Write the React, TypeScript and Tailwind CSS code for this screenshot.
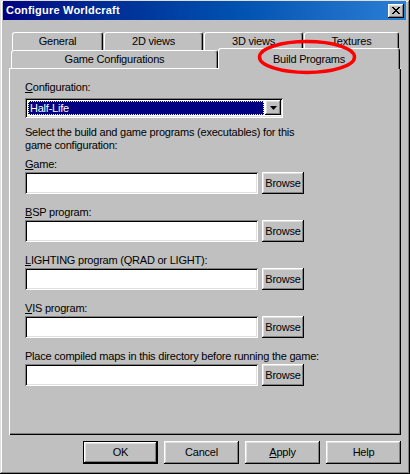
import React from "react";

const raised =
  "shadow-[inset_-1px_-1px_#000,inset_1px_1px_#fff,inset_-2px_-2px_#808080,inset_2px_2px_#dfdfdf]";
const sunken =
  "shadow-[inset_1px_1px_#808080,inset_-1px_-1px_#fff,inset_2px_2px_#000,inset_-2px_-2px_#dfdfdf]";

function U({ c }: { c: string }) {
  return <span className="underline underline-offset-[1px]">{c}</span>;
}

function Field({ label }: { label: React.ReactNode }) {
  return (
    <div className="flex flex-col">
      <div className="h-[13px] leading-[13px]">{label}</div>
      <div className="mt-[1px] flex items-start gap-[4px]">
        <div className={`w-[233px] h-[22px] bg-white ${sunken}`} />
        <button
          className={`w-[42px] h-[22px] bg-[#c0c0c0] flex items-center justify-center text-black ${raised}`}
        >
          Browse
        </button>
      </div>
    </div>
  );
}

function Tab({
  label,
  className,
}: {
  label: string;
  className: string;
}) {
  return (
    <div
      className={`h-[18px] bg-[#c0c0c0] border-l border-t border-white rounded-t-[3px] border-r border-r-black shadow-[inset_-1px_0_#808080] flex items-center justify-center ${className}`}
    >
      {label}
    </div>
  );
}

function DlgButton({
  children,
  isDefault,
}: {
  children: React.ReactNode;
  isDefault?: boolean;
}) {
  if (isDefault) {
    return (
      <div className="w-[75px] h-[23px] border border-black">
        <div
          className={`w-full h-full bg-[#c0c0c0] flex items-center justify-center ${raised}`}
        >
          {children}
        </div>
      </div>
    );
  }
  return (
    <div
      className={`w-[75px] h-[23px] bg-[#c0c0c0] flex items-center justify-center ${raised}`}
    >
      {children}
    </div>
  );
}

export default function App() {
  return (
    <div
      className="relative w-[410px] h-[474px] bg-[#c0c0c0] flex flex-col pt-[1px] pl-[3px] pr-[4px] text-[11px] tracking-[-0.22px] text-black shadow-[inset_-1px_-1px_#000,inset_1px_1px_#dfdfdf,inset_-2px_-2px_#808080,inset_2px_2px_#fff]"
      style={{ fontFamily: '"Liberation Sans", Arial, sans-serif' }}
    >
      {/* Title bar */}
      <div className="h-[19px] bg-gradient-to-r from-[#000080] to-[#2a7fd4] flex items-center justify-between pl-[3px] pr-[2px]">
        <span className="text-white font-bold text-[11px] tracking-[0.2px] leading-[13px]">
          Configure Worldcraft
        </span>
        <div
          className={`w-[16px] h-[14px] bg-[#c0c0c0] flex items-center justify-center ${raised}`}
        >
          <svg width="8" height="7" viewBox="0 0 8 7" className="mb-[1px]">
            <path
              d="M0 0h2v1h1v1h2v-1h1v-1h2v1h-1v1h-1v1h-1v1h1v1h1v1h1v1h-2v-1h-1v-1h-2v1h-1v1h-2v-1h1v-1h1v-1h1v-1h-1v-1h-1v-1h-1z"
              fill="#000"
            />
          </svg>
        </div>
      </div>

      {/* Tab control */}
      <div className="flex flex-col pl-[6px] pr-[5px] pt-[12px]">
        <div className="flex pl-[3px] gap-[1px]">
          <Tab label="General" className="w-[91px]" />
          <Tab label="2D views" className="w-[99px]" />
          <Tab label="3D views" className="w-[99px]" />
          <Tab label="Textures" className="w-[95px]" />
        </div>
        <div className="flex pl-[2px] relative z-10">
          <Tab label="Game Configurations" className="w-[207px]" />
          <div className="w-[182px] h-[21px] -mt-[2px] -mb-[1px] bg-[#c0c0c0] border-l border-t border-white rounded-t-[3px] border-r border-r-black shadow-[inset_-1px_0_#808080] flex items-start justify-center pt-[2px]">
            Build Programs
          </div>
        </div>
        <div className="h-[367px] bg-[#c0c0c0] shadow-[inset_1px_1px_#fff,inset_-1px_-1px_#000,inset_-2px_-2px_#808080] flex flex-col pl-[16px] pt-[13px]">
          <div className="h-[13px] leading-[13px]">
            <U c="C" />
            onfiguration:
          </div>
          <div
            className={`mt-[4px] w-[258px] h-[20px] bg-white flex items-stretch p-[3px] pr-[2px] ${sunken}`}
          >
            <div className="flex-1 bg-[#000080] border border-dotted border-[#ffff7f] text-white leading-[12px] pl-[1px] mr-[1px]">
              Half-Life
            </div>
            <div
              className={`w-[16px] -mt-[1px] bg-[#c0c0c0] flex items-center justify-center ${raised}`}
            >
              <svg width="7" height="4" viewBox="0 0 7 4">
                <path d="M0 0h7L3.5 4z" fill="#000" />
              </svg>
            </div>
          </div>
          <div className="mt-[8px] leading-[13px]">
            Select the build and game programs (executables) for this
            <br />
            game configuration:
          </div>
          <div className="mt-[6px] flex flex-col gap-[12px]">
            <Field
              label={
                <>
                  <U c="G" />
                  ame:
                </>
              }
            />
            <Field
              label={
                <>
                  <U c="B" />
                  SP program:
                </>
              }
            />
            <Field
              label={
                <>
                  <U c="L" />
                  IGHTING program (QRAD or LIGHT):
                </>
              }
            />
            <Field
              label={
                <>
                  <U c="V" />
                  IS program:
                </>
              }
            />
            <Field label="Place compiled maps in this directory before running the game:" />
          </div>
        </div>
      </div>

      {/* Buttons */}
      <div className="mt-[6px] flex justify-end gap-[6px] pr-[5px]">
        <DlgButton isDefault>OK</DlgButton>
        <DlgButton>Cancel</DlgButton>
        <DlgButton>
          <U c="A" />
          pply
        </DlgButton>
        <DlgButton>Help</DlgButton>
      </div>

      {/* Red annotation ellipse */}
      <svg
        className="absolute z-20 left-[256px] top-[38px] pointer-events-none"
        width="102"
        height="38"
        viewBox="0 0 102 38"
      >
        <ellipse
          cx="51"
          cy="19"
          rx="47.5"
          ry="15.5"
          fill="none"
          stroke="#ff0000"
          strokeWidth="3.5"
        />
      </svg>
    </div>
  );
}
